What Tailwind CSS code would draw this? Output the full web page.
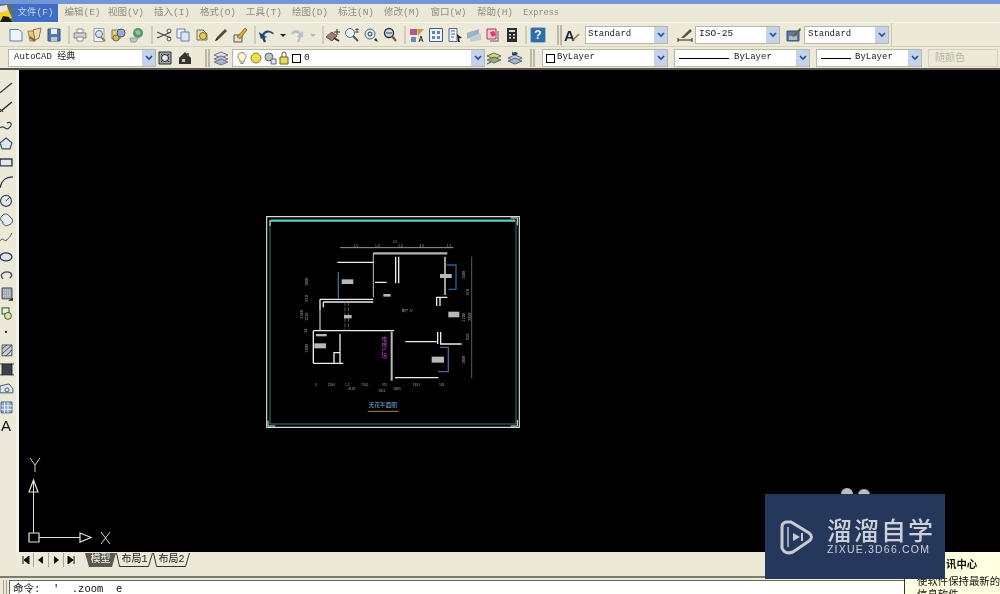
<!DOCTYPE html>
<html lang="zh">
<head>
  <meta charset="UTF-8" />
  <title>AutoCAD 经典</title>
  <script src="https://cdn.jsdelivr.net/npm/@tailwindcss/browser@4"></script>
</head>
<body class="bg-black">
<div class="relative w-[1000px] h-[594px] overflow-hidden flex flex-col bg-[#ece9d8] text-[#222] text-[9px] blur-[0.4px] font-['Liberation_Mono','Noto_Sans_CJK_SC',monospace]">

  <!-- title bar -->
  <div class="h-[4px] shrink-0 bg-[#6f97d9]"></div>

  <!-- menu bar -->
  <div class="h-[18px] shrink-0 flex items-center bg-[#ebe8d8] text-[#8f8d80] text-[9.5px]">
    <div class="w-[13px] h-[18px] shrink-0 bg-[#5f6f70] overflow-hidden">
      <svg viewBox="0 0 13 18" class="w-[13px] h-[18px]"><path d="M0 9 L8 5 L12 14 L0 18Z" fill="#f5d020"/><path d="M0 2 L7 1 L8 6 L0 9Z" fill="#e8e8e0"/><path d="M3 12 L9 13 L12 18 L0 18Z" fill="#1b1b1b"/></svg>
    </div>
    <div class="w-[45px] h-[18px] pt-[1px] flex items-center justify-center bg-[#3f6fc4] text-[#c5d4ee]">文件(F)</div>
    <div class="w-[46px] ml-[-1px] pl-[5px] pt-[1px] flex justify-center">编辑(E)</div>
    <div class="w-[46px] pt-[1px] flex justify-center">视图(V)</div>
    <div class="w-[46px] pt-[1px] flex justify-center">插入(I)</div>
    <div class="w-[46px] pt-[1px] flex justify-center">格式(O)</div>
    <div class="w-[46px] pt-[1px] flex justify-center">工具(T)</div>
    <div class="w-[46px] pt-[1px] flex justify-center">绘图(D)</div>
    <div class="w-[46px] pt-[1px] flex justify-center">标注(N)</div>
    <div class="w-[46px] pt-[1px] flex justify-center">修改(M)</div>
    <div class="w-[47px] pt-[1px] flex justify-center">窗口(W)</div>
    <div class="w-[46px] pt-[1px] flex justify-center">帮助(H)</div>
    <div class="w-[46px] pt-[1px] flex justify-center text-[8.5px]">Express</div>
  </div>

  <!-- standard toolbar -->
  <div class="h-[24px] shrink-0 flex items-center border-t border-[#f8f6ec]">
    <div class="w-[8px] shrink-0"></div>
    <div class="flex gap-[3px]">
      <svg viewBox="0 0 16 16" class="w-4 h-4"><path d="M2 2.5H11L14 5.5V14H2Z" fill="#eef3fb" stroke="#5c7fa8"/></svg>
      <svg viewBox="0 0 16 16" class="w-4 h-4"><path d="M1 4H6L8 6V14H3Z" fill="#e8c890" stroke="#9a7a50"/><path d="M6 3L14 1L12 11L8 13Z" fill="#f0dcb0" stroke="#a06a4a"/><path d="M3 10L8 14" stroke="#5a7a30" stroke-width="2"/></svg>
      <svg viewBox="0 0 16 16" class="w-4 h-4"><path d="M2 2H14V14H2Z" fill="#5578a8" stroke="#35557f"/><path d="M5 2H11V7H5Z" fill="#e8eef6"/><path d="M5 10H11V14H5Z" fill="#b9c6d8"/></svg>
    </div>
    <div class="w-[2px] h-[18px] ml-[6px] bg-[#cfccb8]"></div>
    <div class="flex gap-[3px] ml-[2px]">
      <svg viewBox="0 0 16 16" class="w-4 h-4"><path d="M5 2H11V6H5Z" fill="#fff" stroke="#8a8a8a"/><path d="M2 6H14V11H2Z" fill="#d4d4d4" stroke="#808080"/><path d="M5 10H11V14H5Z" fill="#fff" stroke="#8a8a8a"/></svg>
      <svg viewBox="0 0 16 16" class="w-4 h-4"><path d="M3 1.5H13V14.5H3Z" fill="#f4f6fa" stroke="#8da2ba"/><circle cx="8" cy="7" r="3.5" fill="#cfe6f2" stroke="#6a6a6a"/><path d="M10 10L14 14" stroke="#a57a3a" stroke-width="2"/></svg>
      <svg viewBox="0 0 16 16" class="w-4 h-4"><path d="M2 3H10V12H2Z" fill="#e8d070" stroke="#777"/><circle cx="11" cy="6" r="4" fill="#8dafd8" stroke="#556"/><circle cx="6" cy="11" r="3" fill="#dcb840" stroke="#666"/></svg>
      <svg viewBox="0 0 16 16" class="w-4 h-4"><circle cx="9" cy="6" r="5" fill="#4f9a78"/><path d="M6 4L10 3L12 7L8 8Z" fill="#9acb80"/><path d="M1 11H9L7 15H2Z" fill="#c0c4cc" stroke="#999"/></svg>
    </div>
    <div class="w-[2px] h-[18px] ml-[6px] bg-[#cfccb8]"></div>
    <div class="flex gap-[3px] ml-[3px]">
      <svg viewBox="0 0 16 16" class="w-4 h-4"><path d="M1 5L15 11M1 11L15 5" stroke="#444" stroke-width="1.2"/><circle cx="13" cy="4" r="2" fill="none" stroke="#555"/><circle cx="13" cy="12" r="2" fill="none" stroke="#555"/></svg>
      <svg viewBox="0 0 16 16" class="w-4 h-4"><path d="M2 2H10V11H2Z" fill="#f2f5fa" stroke="#5f80aa"/><path d="M6 5H14V14H6Z" fill="#dbe6f4" stroke="#5f80aa"/></svg>
      <svg viewBox="0 0 16 16" class="w-4 h-4"><path d="M3 3H9L13 7V13H3Z" fill="#d8e2c0" stroke="#667a50"/><circle cx="9" cy="9" r="3.5" fill="#e8c860" stroke="#8a6a20"/></svg>
      <svg viewBox="0 0 16 16" class="w-4 h-4"><path d="M2 14L4 10L12 2L14 4L6 12Z" fill="#5a4a30"/><path d="M2 14L4 11L5 13Z" fill="#222"/></svg>
      <svg viewBox="0 0 16 16" class="w-4 h-4"><path d="M2 8H10V15H2Z" fill="#e8e4d0" stroke="#555"/><path d="M5 10L13 1L15 3L8 12Z" fill="#d8a830" stroke="#6a5010" stroke-width=".6"/></svg>
    </div>
    <div class="w-[2px] h-[18px] ml-[6px] bg-[#cfccb8]"></div>
    <svg viewBox="0 0 16 16" class="w-4 h-4 ml-[3px]"><path d="M14 7C11 3 7 3 5 6L8 8H1V1L3.500 4C7 0 12 1 15 6Z" fill="#24456f" transform="rotate(-15 8 8) translate(0 2)"/><path d="M4 8C4 11 5 13 6 15" stroke="#24456f" stroke-width="2.500" fill="none"/></svg>
    <svg viewBox="0 0 8 16" class="w-[8px] h-4 ml-[4px]"><path d="M1 7H7L4 10Z" fill="#222"/></svg>
    <svg viewBox="0 0 16 16" class="w-4 h-4 ml-[2px]"><path d="M2 6C5 2 9 2 12 6L14 4V10H8L10 8C8 5 6 5 4 8Z" fill="#b7c0ca"/><path d="M11 9C11 11 10 13 9 15" stroke="#b7c0ca" stroke-width="2" fill="none"/></svg>
    <svg viewBox="0 0 8 16" class="w-[8px] h-4 ml-[4px]"><path d="M1 7H7L4 10Z" fill="#b8b8a8"/></svg>
    <div class="w-[2px] h-[18px] ml-[5px] bg-[#cfccb8]"></div>
    <div class="flex gap-[3px] ml-[1px]">
      <svg viewBox="0 0 16 16" class="w-4 h-4"><path d="M1 10L7 5L12 9L7 14Z" fill="#a07a78" stroke="#65504f"/><path d="M12 2V8M9 5H15" stroke="#333"/><path d="M9 11L14 14" stroke="#333" stroke-width="2"/></svg>
      <svg viewBox="0 0 16 16" class="w-4 h-4"><circle cx="6" cy="6" r="4.500" fill="#e8f0f8" stroke="#5c6f88"/><path d="M9 9L14 14" stroke="#555" stroke-width="2"/><path d="M13 1V6M11 2.500H15M11 5H15" stroke="#444" stroke-width=".8"/></svg>
      <svg viewBox="0 0 16 16" class="w-4 h-4"><circle cx="7" cy="7" r="5" fill="#dde8f4" stroke="#4f6684"/><circle cx="7" cy="7" r="2" fill="none" stroke="#333"/><path d="M11 13L15 15L13 11Z" fill="#222"/></svg>
      <svg viewBox="0 0 16 16" class="w-4 h-4"><circle cx="7" cy="6" r="4.500" fill="#c8d8ea" stroke="#333" stroke-width="1.400"/><path d="M10 9L14 14" stroke="#8a5030" stroke-width="2.200"/><path d="M4 6H10" stroke="#444"/></svg>
    </div>
    <div class="w-[2px] h-[18px] ml-[6px] bg-[#cfccb8]"></div>
    <div class="flex gap-[3px] ml-[3px]">
      <svg viewBox="0 0 16 16" class="w-4 h-4"><path d="M1 2H8V8H1Z" fill="#b05a90"/><path d="M8 2H15L9 9Z" fill="#c9a040"/><path d="M2 10H7V15H2Z" fill="#6a8ab0"/><path d="M10 15L12 9L14 15M11 13H13" stroke="#333" fill="none"/></svg>
      <svg viewBox="0 0 16 16" class="w-4 h-4"><path d="M1.500 1.500H14.500V14.500H1.500Z" fill="#eef2f8" stroke="#3f5f88"/><path d="M4 4H7V7H4ZM9 4H12V7H9ZM4 9H7V12H4ZM9 9H12V12H9Z" fill="#6a84a8"/></svg>
      <svg viewBox="0 0 16 16" class="w-4 h-4"><path d="M2 1.500H10V14.500H2Z" fill="#eef2f8" stroke="#536d90"/><path d="M4 4H8M4 7H8M4 10H7" stroke="#536d90"/><path d="M10 7L15 11L12 11.500L13 15L11 15Z" fill="#222"/></svg>
      <svg viewBox="0 0 16 16" class="w-4 h-4"><path d="M1 6L13 2V7L1 12Z" fill="#9fb0c0"/><path d="M4 11L15 6V13L4 15Z" fill="#c2ccd4"/></svg>
      <svg viewBox="0 0 16 16" class="w-4 h-4"><path d="M2 2H11V12H2Z" fill="#f2c8d8" stroke="#c03050"/><path d="M5 5L9 4L11 8L7 10Z" fill="#d04060"/><path d="M13 4V14H5" stroke="#8a8a90" stroke-width="1.500" fill="none"/></svg>
      <svg viewBox="0 0 16 16" class="w-4 h-4"><path d="M3 1H13V15H3Z" fill="#2a2a2a"/><path d="M5 3H11V5H5Z" fill="#cfd8e0"/><path d="M5 7H7V8.500H5ZM9 7H11V8.500H9ZM5 10H7V11.500H5ZM9 10H11V11.500H9Z" fill="#e8e8e8"/></svg>
    </div>
    <div class="w-[2px] h-[18px] ml-[5px] bg-[#cfccb8]"></div>
    <div class="w-4 h-4 ml-[3px] rounded-[2px] bg-[#2f6fa8] border border-[#9ab8d8] text-white text-[12px] font-bold leading-[14px] text-center font-['Liberation_Sans',sans-serif]">?</div>
    <div class="w-[2px] h-[20px] ml-[11px] bg-[#bdb9a4]"></div>
    <div class="w-[2px] h-[20px] ml-[1px] bg-[#bdb9a4]"></div>
    <svg viewBox="0 0 16 16" class="w-4 h-4 ml-[2px] font-['Liberation_Sans',sans-serif]"><text x="0" y="14" font-size="15" font-weight="bold" fill="#1c2a40">A</text><path d="M8 14L15 7" stroke="#8a6a40" stroke-width="1.500"/></svg>
    <div class="w-[83px] h-[18px] ml-[5px] flex items-center bg-white border border-[#b9b7a6]">
      <span class="flex-1 pl-[2px]">Standard</span>
      <div class="w-[13px] h-[16px] flex items-center justify-center bg-[#c3d3ee]"><svg viewBox="0 0 8 6" class="w-2 h-[6px]"><path d="M1 1L4 4L7 1" fill="none" stroke="#2d4a80" stroke-width="1.600"/></svg></div>
    </div>
    <svg viewBox="0 0 16 16" class="w-4 h-4 ml-[9px]"><path d="M1 13H15M1 11V15M15 11V15" stroke="#222"/><path d="M4 11L13 2L15 4L7 11Z" fill="#59503a"/></svg>
    <div class="w-[85px] h-[18px] ml-[2px] flex items-center bg-white border border-[#b9b7a6]">
      <span class="flex-1 pl-[3px] text-[9.500px]">ISO-25</span>
      <div class="w-[13px] h-[16px] flex items-center justify-center bg-[#c3d3ee]"><svg viewBox="0 0 8 6" class="w-2 h-[6px]"><path d="M1 1L4 4L7 1" fill="none" stroke="#2d4a80" stroke-width="1.600"/></svg></div>
    </div>
    <svg viewBox="0 0 16 16" class="w-4 h-4 ml-[6px]"><path d="M1 4H13V14H1Z" fill="#5f7a9f" stroke="#35507a"/><path d="M3 10H11M3 12H11" stroke="#fff"/><path d="M6 9L14 1L15 3L8 10Z" fill="#6a6040"/></svg>
    <div class="w-[85px] h-[18px] ml-[2px] flex items-center bg-white border border-[#b9b7a6]">
      <span class="flex-1 pl-[3px]">Standard</span>
      <div class="w-[13px] h-[16px] flex items-center justify-center bg-[#c3d3ee]"><svg viewBox="0 0 8 6" class="w-2 h-[6px]"><path d="M1 1L4 4L7 1" fill="none" stroke="#2d4a80" stroke-width="1.600"/></svg></div>
    </div>
    <div class="w-[1px] h-[24px] ml-[2px] bg-[#c8c5b2]"></div>
  </div>

  <!-- layers toolbar -->
  <div class="h-[22px] shrink-0 pt-[1px] flex items-center border-t border-[#d5d2bf]">
    <div class="w-[148px] h-[18px] ml-[8px] flex items-center bg-white border border-[#b9b7a6]">
      <span class="flex-1 pl-[5px]">AutoCAD 经典</span>
      <div class="w-[13px] h-[16px] flex items-center justify-center bg-[#c3d3ee]"><svg viewBox="0 0 8 6" class="w-2 h-[6px]"><path d="M1 1L4 4L7 1" fill="none" stroke="#2d4a80" stroke-width="1.600"/></svg></div>
    </div>
    <svg viewBox="0 0 16 16" class="w-4 h-4 ml-[1px]"><path d="M2 2H14V14H2Z" fill="#9aa0a6" stroke="#333"/><circle cx="8" cy="8" r="3.500" fill="#e8e8e8" stroke="#222"/><path d="M4 4L6 6M12 4L10 6M4 12L6 10M12 12L10 10" stroke="#222"/></svg>
    <svg viewBox="0 0 16 16" class="w-4 h-4 ml-[4px]"><path d="M2 8L8 2L14 8V14H2Z" fill="#333"/><path d="M5 9H8V12H5Z" fill="#c9c4b0"/><path d="M10 3H12V6H10Z" fill="#8a5a40"/></svg>
    <div class="w-[2px] h-[18px] ml-[12px] bg-[#bdb9a4]"></div>
    <div class="w-[2px] h-[18px] ml-[1px] bg-[#bdb9a4]"></div>
    <svg viewBox="0 0 16 16" class="w-4 h-4 ml-[3px]"><path d="M8 2L15 5L8 8L1 5Z" fill="#d8dfe6" stroke="#778"/><path d="M8 6L15 9L8 12L1 9Z" fill="#b8c4d0" stroke="#778"/><path d="M8 9L15 12L8 15L1 12Z" fill="#a8b6c4" stroke="#778"/></svg>
    <div class="w-[253px] h-[18px] ml-[3px] flex items-center bg-white border border-[#b9b7a6]">
      <svg viewBox="0 0 14 14" class="w-[14px] h-[14px] ml-[2px]"><path d="M7 1.500A4 4 0 0 1 9 9V11H5V9A4 4 0 0 1 7 1.500Z" fill="#fdfbd8" stroke="#888860"/><path d="M5.500 12.500H8.500" stroke="#888"/></svg>
      <svg viewBox="0 0 14 14" class="w-[14px] h-[14px]"><circle cx="7" cy="7" r="5" fill="#ecdc50" stroke="#8a8420"/></svg>
      <svg viewBox="0 0 14 14" class="w-[14px] h-[14px]"><circle cx="6" cy="6" r="4" fill="#b8c8b8" stroke="#667"/><path d="M8 8H13V13H8Z" fill="#dde4ec" stroke="#667"/></svg>
      <svg viewBox="0 0 14 14" class="w-[14px] h-[14px]"><path d="M3 6H11V13H3Z" fill="#e8dc60" stroke="#6a6420"/><path d="M5 6V3A2 2 0 0 1 9 3V6" fill="none" stroke="#6a6420"/></svg>
      <div class="w-[9px] h-[9px] ml-[1px] border border-black bg-white"></div>
      <span class="flex-1 pl-[3px] text-[9.500px]">0</span>
      <div class="w-[13px] h-[16px] flex items-center justify-center bg-[#c3d3ee]"><svg viewBox="0 0 8 6" class="w-2 h-[6px]"><path d="M1 1L4 4L7 1" fill="none" stroke="#2d4a80" stroke-width="1.600"/></svg></div>
    </div>
    <svg viewBox="0 0 16 16" class="w-4 h-4 ml-[1px]"><path d="M8 3L15 6L8 9L1 6Z" fill="#d8d860" stroke="#667"/><path d="M8 7L15 10L8 13L1 10Z" fill="#90b070" stroke="#667"/><path d="M1 14L5 12" stroke="#444"/></svg>
    <svg viewBox="0 0 16 16" class="w-4 h-4 ml-[5px]"><path d="M8 5L15 8L8 11L1 8Z" fill="#c8d4e0" stroke="#567"/><path d="M8 8L15 11L8 14L1 11Z" fill="#a8b8c8" stroke="#567"/><path d="M11 4A3 3 0 0 0 6 3L5 1V5H9" fill="#24456f"/></svg>
    <div class="w-[2px] h-[18px] ml-[7px] bg-[#bdb9a4]"></div>
    <div class="w-[2px] h-[18px] ml-[1px] bg-[#bdb9a4]"></div>
    <div class="w-[126px] h-[18px] ml-[7px] flex items-center bg-white border border-[#b9b7a6]">
      <div class="w-[9px] h-[9px] ml-[3px] border border-black bg-white"></div>
      <span class="flex-1 pl-[2px]">ByLayer</span>
      <div class="w-[13px] h-[16px] flex items-center justify-center bg-[#c3d3ee]"><svg viewBox="0 0 8 6" class="w-2 h-[6px]"><path d="M1 1L4 4L7 1" fill="none" stroke="#2d4a80" stroke-width="1.600"/></svg></div>
    </div>
    <div class="w-[136px] h-[18px] ml-[6px] flex items-center bg-white border border-[#b9b7a6]">
      <div class="w-[50px] h-px ml-[4px] bg-black"></div>
      <span class="flex-1 pl-[5px]">ByLayer</span>
      <div class="w-[13px] h-[16px] flex items-center justify-center bg-[#c3d3ee]"><svg viewBox="0 0 8 6" class="w-2 h-[6px]"><path d="M1 1L4 4L7 1" fill="none" stroke="#2d4a80" stroke-width="1.600"/></svg></div>
    </div>
    <div class="w-[106px] h-[18px] ml-[6px] flex items-center bg-white border border-[#b9b7a6]">
      <div class="w-[30px] h-px ml-[4px] bg-black"></div>
      <span class="flex-1 pl-[4px]">ByLayer</span>
      <div class="w-[13px] h-[16px] flex items-center justify-center bg-[#c3d3ee]"><svg viewBox="0 0 8 6" class="w-2 h-[6px]"><path d="M1 1L4 4L7 1" fill="none" stroke="#2d4a80" stroke-width="1.600"/></svg></div>
    </div>
    <div class="w-[70px] h-[18px] ml-[6px] pl-[6px] flex items-center border border-[#d5d2c0] text-[#b5b3a4] text-[10px]">随颜色</div>
  </div>

  <!-- drawing area -->
  <div class="h-[2px] shrink-0 bg-[#55544c]"></div>
  <div class="h-[482px] shrink-0 flex">
    <div class="w-[19px] shrink-0 pt-[8px] flex flex-col items-start border-r-[3px] border-[#f4f2e6]">
      <svg viewBox="0 0 14 19" class="w-[14px] h-[18.800px]"><path d="M0 15L12 5" stroke="#30405a" stroke-width="1.400"/></svg>
      <svg viewBox="0 0 14 19" class="w-[14px] h-[18.800px]"><path d="M0 15L12 5" stroke="#222" stroke-width="1.400"/><path d="M0 12L3 15" stroke="#222"/></svg>
      <svg viewBox="0 0 14 19" class="w-[14px] h-[18.800px]"><path d="M0 12C4 8 6 16 9 12C13 9 11 5 7 7" stroke="#30405a" fill="none" stroke-width="1.200"/></svg>
      <svg viewBox="0 0 14 19" class="w-[14px] h-[18.800px]"><path d="M6 4L12 9L10 15H2L0 9Z" fill="#dfe6ee" stroke="#3c4a60" stroke-width="1.200"/></svg>
      <svg viewBox="0 0 14 19" class="w-[14px] h-[18.800px]"><path d="M0 6H12V13H0Z" fill="#e4e8ee" stroke="#303a50" stroke-width="1.400"/></svg>
      <svg viewBox="0 0 14 19" class="w-[14px] h-[18.800px]"><path d="M0 16C1 9 6 5 13 5" stroke="#303a50" fill="none" stroke-width="1.300"/></svg>
      <svg viewBox="0 0 14 19" class="w-[14px] h-[18.800px]"><circle cx="6" cy="10" r="5.500" fill="#e4e8ee" stroke="#3a4a60" stroke-width="1.200"/><path d="M6 10L10 6" stroke="#3a4a60"/></svg>
      <svg viewBox="0 0 14 19" class="w-[14px] h-[18.800px]"><path d="M2 6C5 2 9 5 10 7C14 9 13 14 9 15C6 17 2 15 3 12C0 11 0 8 2 6Z" fill="#e8ecf0" stroke="#3a4a60"/></svg>
      <svg viewBox="0 0 14 19" class="w-[14px] h-[18.800px]"><path d="M0 13C3 8 4 15 7 12C9 9 10 10 12 5" stroke="#405060" fill="none"/></svg>
      <svg viewBox="0 0 14 19" class="w-[14px] h-[18.800px]"><ellipse cx="6" cy="10" rx="6" ry="4" fill="#dfe6ee" stroke="#2c3a50" stroke-width="1.300"/></svg>
      <svg viewBox="0 0 14 19" class="w-[14px] h-[18.800px]"><path d="M3 13C-1 9 3 6 7 6C12 6 13 10 10 12" fill="none" stroke="#3a4a60" stroke-width="1.300"/></svg>
      <svg viewBox="0 0 14 19" class="w-[14px] h-[18.800px]"><path d="M2 3H12V14H2Z" fill="#a0aab4" stroke="#445"/><path d="M3 5H11M3 8H11M3 11H11" stroke="#e4e4e4" stroke-dasharray="1 1"/><path d="M8 16L13 13V16Z" fill="#222"/></svg>
      <svg viewBox="0 0 14 19" class="w-[14px] h-[18.800px]"><path d="M2 4H9V10H2Z" fill="none" stroke="#3a7a40" stroke-width="1.200"/><circle cx="8" cy="12" r="3.500" fill="#e8e0a0" stroke="#3a5a30"/></svg>
      <svg viewBox="0 0 14 19" class="w-[14px] h-[18.800px]"><rect x="5" y="9" width="2" height="2" fill="#222"/></svg>
      <svg viewBox="0 0 14 19" class="w-[14px] h-[18.800px]"><path d="M2 4H12V15H2Z" fill="#c4ccd4" stroke="#556"/><path d="M2 8L7 4M2 13L12 4M6 15L12 9" stroke="#445"/></svg>
      <svg viewBox="0 0 14 19" class="w-[14px] h-[18.800px]"><path d="M2 4H12V15H2Z" fill="#3a4250" stroke="#222"/><path d="M0 4H3M11 4H14M0 15H3M11 15H14" stroke="#333"/></svg>
      <svg viewBox="0 0 14 19" class="w-[14px] h-[18.800px]"><path d="M0 7L9 5L13 10V14H0Z" fill="#dfe6ee" stroke="#4a5a70"/><circle cx="7" cy="11" r="2" fill="none" stroke="#4a5a70"/></svg>
      <svg viewBox="0 0 14 19" class="w-[14px] h-[18.800px]"><path d="M1 4H12V15H1Z" fill="#8ea8cc" stroke="#4a6288"/><path d="M1 8H12M1 11.500H12M4.500 4V15M8 4V15" stroke="#e8eef6"/></svg>
      <div class="w-[14px] h-[19px] pl-[1px] text-[15px] leading-[19px] text-[#111] font-['Liberation_Sans',sans-serif]">A</div>
    </div>

    <!-- model space -->
    <div class="relative flex-1 bg-black">
      <svg viewBox="0 0 810 675" class="absolute left-[241px] top-[140px] w-[270px] h-[225px] font-['Liberation_Sans','Noto_Sans_CJK_SC',sans-serif]">
        <path d="M20 20H778V652H20Z" fill="none" stroke="#d8dcdc" stroke-width="3.500"/>
        <path d="M30 32H768V642H30Z" fill="none" stroke="#3a9a98" stroke-width="2.500"/>
        <path d="M32 32H765" stroke="#63cdbb" stroke-width="7"/>
        <path d="M30 30V48M752 24H772V46M24 632V648H46M752 648H772V630" fill="none" stroke="#d8eeee" stroke-width="3"/>
        <path d="M240 113H580" stroke="#9a9a9a" stroke-width="3"/>
        <path d="M635 140V505" stroke="#8a8a8a" stroke-width="2"/>
        <g fill="none" stroke="#eeeeee" stroke-width="4">
          <path d="M340 130H562" stroke="#b5b5b5" stroke-width="7"/>
          <path d="M340 130V262" stroke-width="2.500"/>
          <path d="M232 157H340M345 217H380M407 140V220M416 140V220"/>
          <path d="M555 140V255M530 288V262H562M540 288V264"/>
          <path d="M180 268H340M180 268V360M190 276H340M190 276V292" />
          <path d="M160 362H402M160 362V460M240 372V425M160 460H250M222 458V428H240V458"/>
          <path d="M395 365V512" stroke="#bbbbbb" stroke-width="6"/>
          <path d="M405 503H535M436 395H530M533 366V402M542 366V402M540 402H605"/>
          <path d="M255 276V362M265 276V362" stroke="#888888" stroke-width="2" stroke-dasharray="12 4"/>
        </g>
        <g fill="none" stroke="#3f6a98" stroke-width="4">
          <path d="M235 185V265M180 300V358"/>
          <path d="M560 165H588V238H565" stroke="#2f5f94"/>
          <path d="M540 412H565V485H535"/>
        </g>
        <g fill="#b8b8b8">
          <rect x="245" y="208" width="35" height="14"/>
          <rect x="540" y="192" width="35" height="12"/>
          <rect x="370" y="252" width="22" height="8"/>
          <rect x="565" y="305" width="33" height="17"/>
          <rect x="252" y="315" width="23" height="10"/>
          <rect x="163" y="400" width="35" height="15"/>
          <rect x="515" y="440" width="37" height="18"/>
          <rect x="168" y="372" width="32" height="7"/>
        </g>
        <g fill="#a0a0a0" font-size="10">
          <text x="280" y="112">1.5</text><text x="345" y="110">1.3</text><text x="398" y="98">4.5</text><text x="415" y="110">2.0</text><text x="478" y="112">3.3</text><text x="560" y="112">1.2</text>
          <text x="165" y="528">3</text><text x="203" y="528">1360</text><text x="255" y="528">1.1</text><text x="303" y="528">7505</text><text x="365" y="528">375</text><text x="458" y="528">1351</text><text x="537" y="528">181</text>
          <text x="264" y="541">3130</text><text x="355" y="545">1811</text><text x="400" y="541">1865</text>
          <text x="425" y="306">客厅 17</text>
        </g>
        <g fill="#b0b0b0" font-size="11" text-anchor="middle">
          <text transform="translate(145 215) rotate(-90)">1800</text>
          <text transform="translate(143 265) rotate(-90)">810</text>
          <text transform="translate(128 313) rotate(-90)">1350</text>
          <text transform="translate(144 320) rotate(-90)">1210</text>
          <text transform="translate(140 362) rotate(-90)">24</text>
          <text transform="translate(143 415) rotate(-90)">1800</text>
          <text transform="translate(614 195) rotate(-90)">1500</text>
          <text transform="translate(628 247) rotate(-90)">370</text>
          <text transform="translate(615 322) rotate(-90)">1200</text>
          <text transform="translate(634 320) rotate(-90)">2850</text>
          <text transform="translate(628 380) rotate(-90)">810</text>
          <text transform="translate(614 450) rotate(-90)">1800</text>
        </g>
        <g fill="#c040c8" font-size="17" text-anchor="middle">
          <text x="373" y="392">电</text><text x="373" y="410">梯</text><text x="373" y="428">广</text><text x="373" y="445">场</text>
        </g>
        <text x="368" y="592" fill="#7ea8de" font-size="17" text-anchor="middle">天花平面图</text>
        <path d="M323 604H415" stroke="#a08468" stroke-width="3"/>
      </svg>

      <!-- UCS icon -->
      <svg viewBox="0 0 90 90" class="absolute left-[5px] top-[388px] w-[90px] h-[90px]">
        <path d="M5 75H15V84H5Z" fill="none" stroke="#e0e0e0" stroke-width="1.200"/>
        <path d="M9.500 75V24" stroke="#e0e0e0"/>
        <path d="M15 79.500H56" stroke="#e0e0e0"/>
        <path d="M9.500 22L14 34H5Z" fill="none" stroke="#e0e0e0" stroke-width="1.200"/>
        <path d="M56 75L67 79.500L56 84Z" fill="none" stroke="#e0e0e0" stroke-width="1.200"/>
        <path d="M6 0L11 7L16 0M11 7V14" fill="none" stroke="#d0d0d0"/>
        <path d="M77 74L86 86M86 74L77 86" fill="none" stroke="#d0d0d0"/>
      </svg>
    </div>
  </div>

  <!-- layout tabs -->
  <div class="h-[15px] shrink-0 flex items-center ml-[19px] text-[10px]">
    <div class="w-[15px] h-[14px] flex items-center justify-center border-r border-[#aaa794] text-[#111]"><svg viewBox="0 0 8 8" class="w-2 h-2"><path d="M1 0V8M7 0L2 4L7 8Z" stroke="#111" fill="#111"/></svg></div>
    <div class="w-[15px] h-[14px] flex items-center justify-center border-r border-[#aaa794]"><svg viewBox="0 0 8 8" class="w-2 h-2"><path d="M6 0L1 4L6 8Z" fill="#111"/></svg></div>
    <div class="w-[15px] h-[14px] flex items-center justify-center border-r border-[#aaa794]"><svg viewBox="0 0 8 8" class="w-2 h-2"><path d="M2 0L7 4L2 8Z" fill="#111"/></svg></div>
    <div class="w-[14px] h-[14px] flex items-center justify-center"><svg viewBox="0 0 8 8" class="w-2 h-2"><path d="M7 0V8M1 0L6 4L1 8Z" stroke="#111" fill="#111"/></svg></div>
    <div class="relative w-[31px] h-[14px] ml-[7px] flex items-center justify-center text-[#f2f2ea] leading-[12px]">
      <svg viewBox="0 0 31 14" class="absolute inset-0 w-[31px] h-[14px]"><path d="M0 0H31L27 14H4Z" fill="#5a5950"/></svg>
      <span class="relative">模型</span>
    </div>
    <div class="relative w-[37px] h-[14px] flex items-center justify-center text-[#222] leading-[12px]">
      <svg viewBox="0 0 37 14" class="absolute inset-0 w-[37px] h-[14px]"><path d="M0.500 0L3.500 13.500H32.500L36.500 0" fill="none" stroke="#333"/></svg>
      <span class="relative">布局1</span>
    </div>
    <div class="relative w-[37px] h-[14px] flex items-center justify-center text-[#222] leading-[12px]">
      <svg viewBox="0 0 37 14" class="absolute inset-0 w-[37px] h-[14px]"><path d="M0.500 0L3.500 13.500H32.500L36.500 0" fill="none" stroke="#333"/></svg>
      <span class="relative">布局2</span>
    </div>
  </div>
  <div class="h-[11px] shrink-0 border-b-2 border-[#7d7b6e] mb-[2px] mr-[235px]"></div>

  <!-- command line -->
  <div class="flex-1 flex min-h-0">
    <div class="w-[9px] shrink-0 flex gap-[2px] pl-[3px]">
      <div class="w-px bg-[#a5a391]"></div>
      <div class="w-px bg-[#a5a391]"></div>
    </div>
    <div class="flex-1 pl-[3px] pt-[2px] bg-white border-t border-l border-[#666] text-[10.500px] leading-[12px] text-[#111] whitespace-pre">命令:  '  .zoom  e</div>
  </div>

  <!-- balloon notification -->
  <div class="absolute left-[904px] top-[552px] w-[96px] h-[42px] bg-[#ffffe1] border-l border-[#333] text-[10.400px] leading-[13px] text-[#111] overflow-hidden">
    <div class="pl-[41px] pt-[5px] font-bold font-['Noto_Sans_CJK_SC',sans-serif]">讯中心</div>
    <div class="pl-[12px] pt-[6px] whitespace-nowrap">使软件保持最新的</div>
    <div class="pl-[12px] whitespace-nowrap">信息软件</div>
  </div>

  <!-- watermark -->
  <div class="absolute left-[841px] top-[488px] w-[12px] h-[12px] rounded-full bg-[#b9bcbc]"></div>
  <div class="absolute left-[858px] top-[489px] w-[12px] h-[12px] rounded-full bg-[#b9bcbc]"></div>
  <div class="absolute left-[765px] top-[494px] w-[180px] h-[85px] flex items-center bg-[#26375c]">
    <svg viewBox="0 0 36 40" class="w-[36px] h-[40px] ml-[14px] mr-[12px]">
      <path d="M7 5H12L30 16Q35 20 30 24L14 35Q6 38 3 31V10Q3 6 7 5Z" fill="none" stroke="#c8cbd2" stroke-width="3"/>
      <path d="M9 10V30" stroke="#c8cbd2" stroke-width="1.500"/>
      <path d="M14 16L21 20L14 24Z" fill="#c8cbd2"/>
      <path d="M23 16V24" stroke="#c8cbd2" stroke-width="2"/>
    </svg>
    <div class="flex flex-col mb-[4px] text-[#ccd0d8] font-['Noto_Sans_CJK_SC',sans-serif]">
      <div class="text-[25px] leading-[28px] font-medium tracking-[2px] whitespace-nowrap">溜溜自学</div>
      <div class="text-[10.500px] leading-[12px] tracking-[1.200px] whitespace-nowrap font-['Liberation_Sans',sans-serif]">ZIXUE.3D66.COM</div>
    </div>
  </div>
</div>
</body>
</html>
